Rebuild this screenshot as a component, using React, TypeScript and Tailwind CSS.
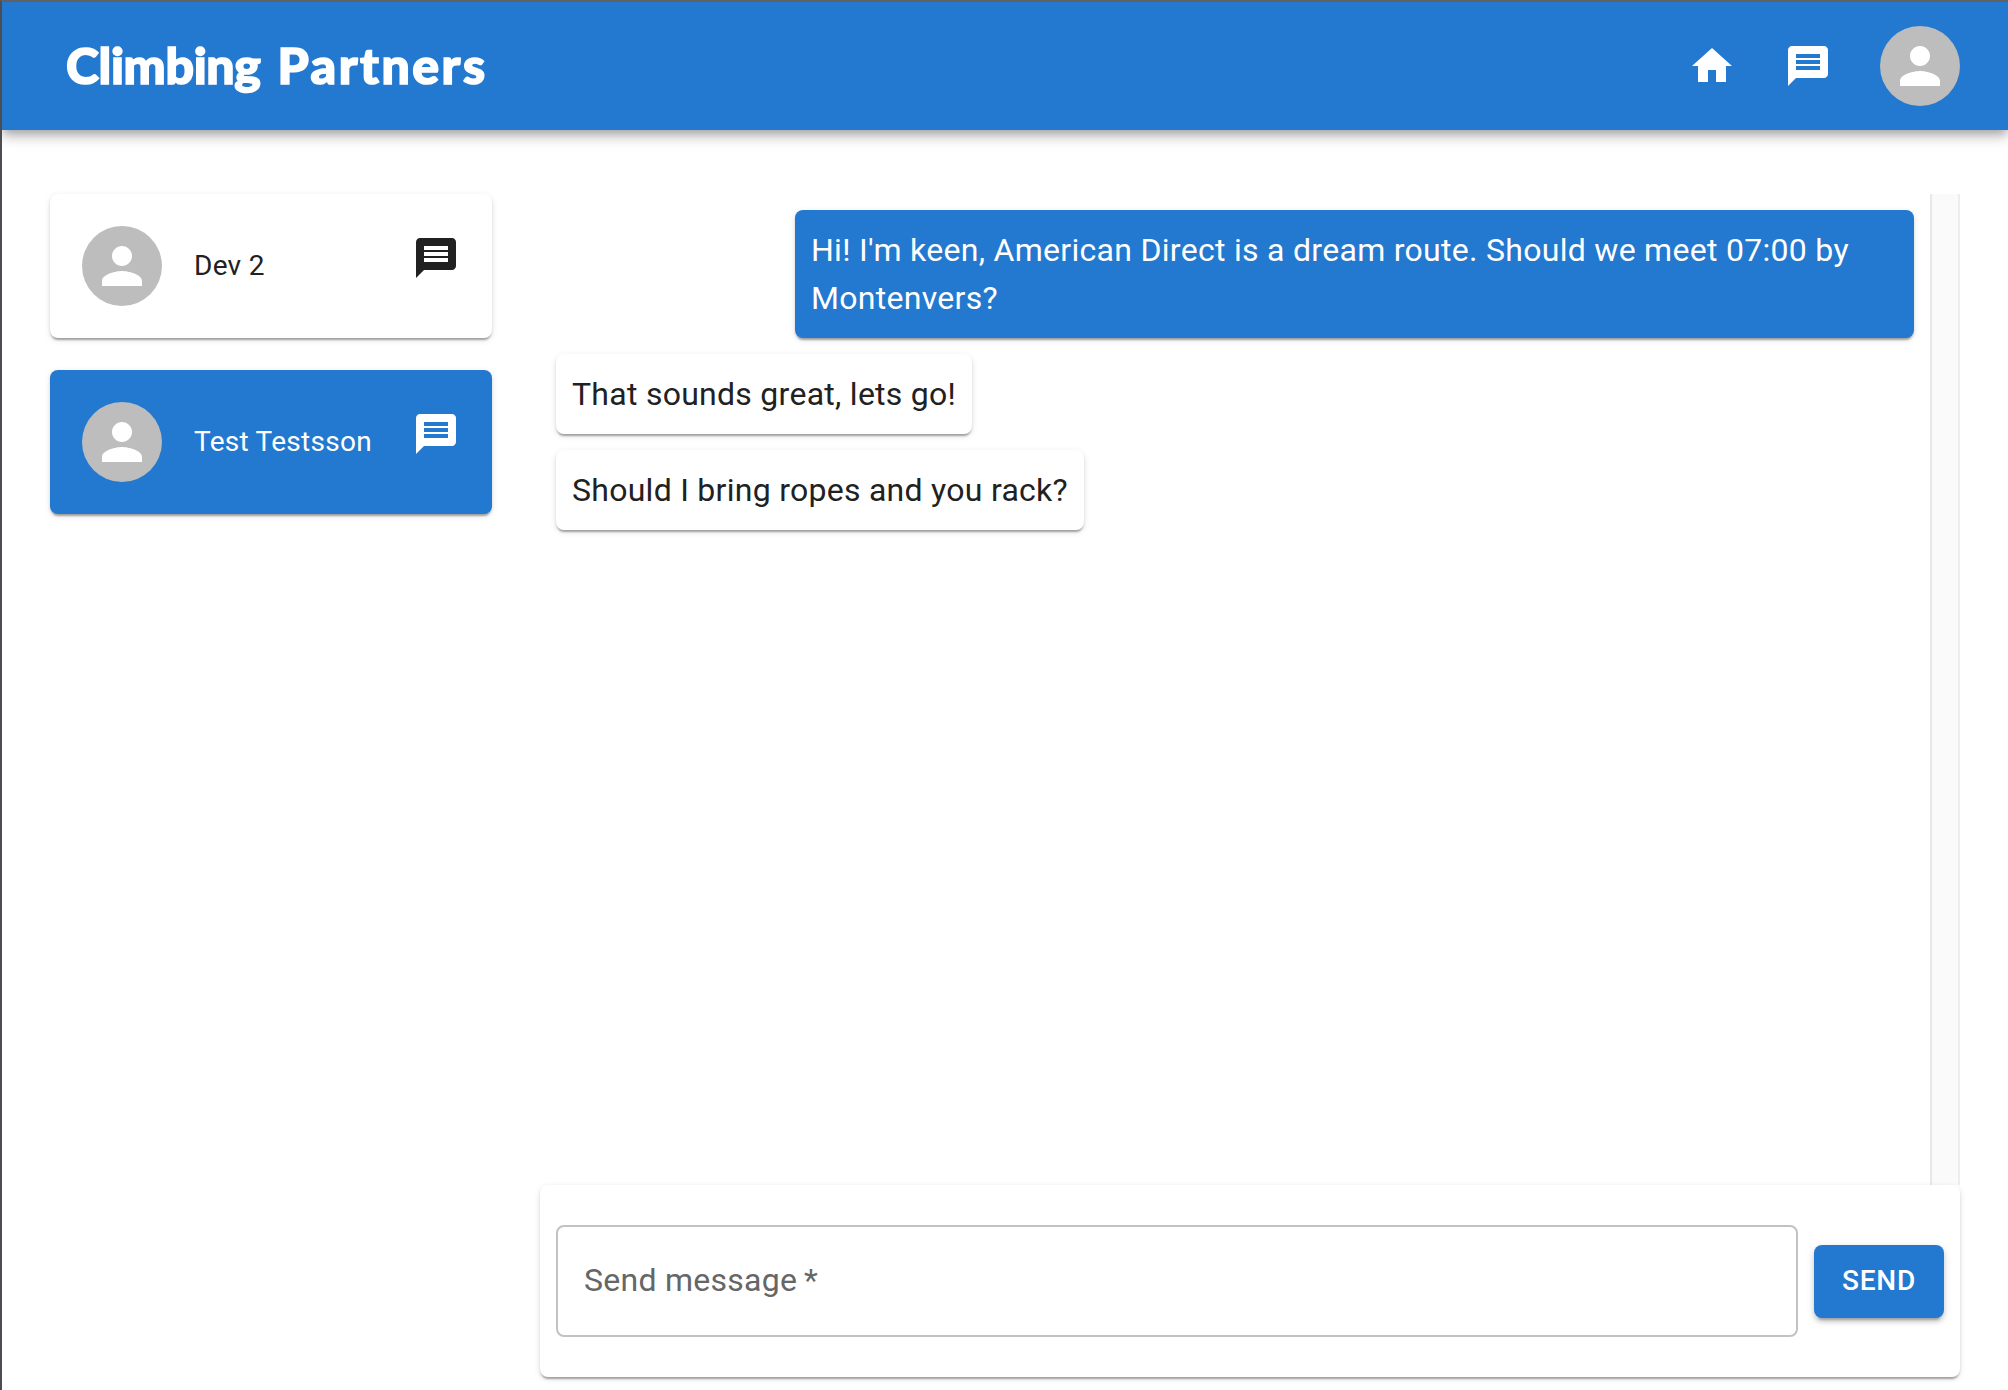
import React from "react";

const PAPER_SHADOW =
  "shadow-[0px_4px_2px_-2px_rgba(0,0,0,0.2),0px_2px_2px_0px_rgba(0,0,0,0.14),0px_2px_6px_0px_rgba(0,0,0,0.12)]";

function HomeIcon() {
  return (
    <svg viewBox="0 0 24 24" className="size-12" fill="currentColor">
      <path d="M10 20v-6h4v6h5v-8h3L12 3 2 12h3v8z" />
    </svg>
  );
}

function MessageIcon() {
  return (
    <svg viewBox="0 0 24 24" className="size-12 shrink-0" fill="currentColor">
      <path d="M20 2H4c-1.1 0-1.99.9-1.99 2L2 22l4-4h14c1.1 0 2-.9 2-2V4c0-1.1-.9-2-2-2zm-2 12H6v-2h12v2zm0-3H6V9h12v2zm0-3H6V6h12v2z" />
    </svg>
  );
}

function Avatar() {
  return (
    <div className="flex size-20 shrink-0 items-center justify-center rounded-full bg-[#bdbdbd] text-white">
      <svg viewBox="0 0 24 24" className="size-[60px]" fill="currentColor">
        <path d="M12 12c2.21 0 4-1.79 4-4s-1.79-4-4-4-4 1.79-4 4 1.79 4 4 4zm0 2c-2.67 0-8 1.34-8 4v2h16v-2c0-2.66-5.33-4-8-4z" />
      </svg>
    </div>
  );
}

function Contact({ name, active = false }: { name: string; active?: boolean }) {
  return (
    <button
      className={`flex h-36 w-full items-center rounded-lg px-8 text-left ${PAPER_SHADOW} ${
        active ? "bg-[#2378cf] text-white" : "bg-white text-[#212121]"
      }`}
    >
      <Avatar />
      <span className="ml-8 flex-1 text-[28px] leading-10 tracking-[0.01em]">{name}</span>
      <span className="mb-4">
        <MessageIcon />
      </span>
    </button>
  );
}

function Message({ text, own = false }: { text: string; own?: boolean }) {
  return (
    <p
      className={`rounded-lg p-4 text-[32px] leading-12 ${PAPER_SHADOW} ${
        own
          ? "max-w-[1119px] self-end bg-[#2378cf] tracking-[0.29px] text-white"
          : "self-start bg-white tracking-[0.27px] text-[#212121]"
      }`}
    >
      {text}
    </p>
  );
}

export default function App() {
  return (
    <div className="flex h-[1390px] w-full flex-col overflow-hidden border-t-2 border-l-2 border-t-[#616161] border-l-[#4b4d52] bg-white font-['Roboto',sans-serif] antialiased">
      <header className="flex h-32 shrink-0 items-center justify-between bg-[#2378cf] pr-12 pl-16 text-white shadow-[0px_4px_8px_-2px_rgba(0,0,0,0.2),0px_8px_10px_0px_rgba(0,0,0,0.14),0px_2px_20px_0px_rgba(0,0,0,0.12)]">
        <h1 className="mb-[3px] flex gap-[17px] font-['Lato',sans-serif] text-[50px] leading-none font-black [-webkit-text-stroke:1.6px_white]">
          <span className="tracking-[-0.35px]">Climbing</span>
          <span className="tracking-[2.5px]">Partners</span>
        </h1>
        <nav className="flex items-center gap-12">
          <HomeIcon />
          <MessageIcon />
          <Avatar />
        </nav>
      </header>

      <main className="flex min-h-0 flex-1 gap-12 pt-16 pr-12 pb-[13px] pl-12">
        <aside className="flex w-[442px] shrink-0 flex-col gap-8">
          <Contact name="Dev 2" />
          <Contact name="Test Testsson" active />
        </aside>

        <section className="flex flex-1 flex-col">
          <div className="flex min-h-0 flex-1">
            <div className="flex flex-1 flex-col gap-4 p-4">
              <Message
                own
                text="Hi! I'm keen, American Direct is a dream route. Should we meet 07:00 by Montenvers?"
              />
              <Message text="That sounds great, lets go!" />
              <Message text="Should I bring ropes and you rack?" />
            </div>
            <div className="w-[30px] border-x-2 border-l-[#e8e8e8] border-r-[#ededed] bg-[#fafafa]" />
          </div>

          <form className={`flex h-48 shrink-0 items-center gap-4 rounded-lg bg-white px-4 ${PAPER_SHADOW}`}>
            <label className="flex h-28 flex-1 items-center rounded-lg border-2 border-[#c2c2c2] px-[26px] text-[32px] tracking-[0.27px] text-[#666666]">
              <span className="mb-0.5">Send message&thinsp;*</span>
            </label>
            <button
              type="button"
              className="mt-px h-[73px] w-[130px] rounded-lg bg-[#2378cf] pb-0.5 text-[28px] font-medium tracking-[0.02857em] text-white shadow-[0px_6px_2px_-4px_rgba(0,0,0,0.2),0px_4px_4px_0px_rgba(0,0,0,0.14),0px_2px_10px_0px_rgba(0,0,0,0.12)]"
            >
              SEND
            </button>
          </form>
        </section>
      </main>
    </div>
  );
}
